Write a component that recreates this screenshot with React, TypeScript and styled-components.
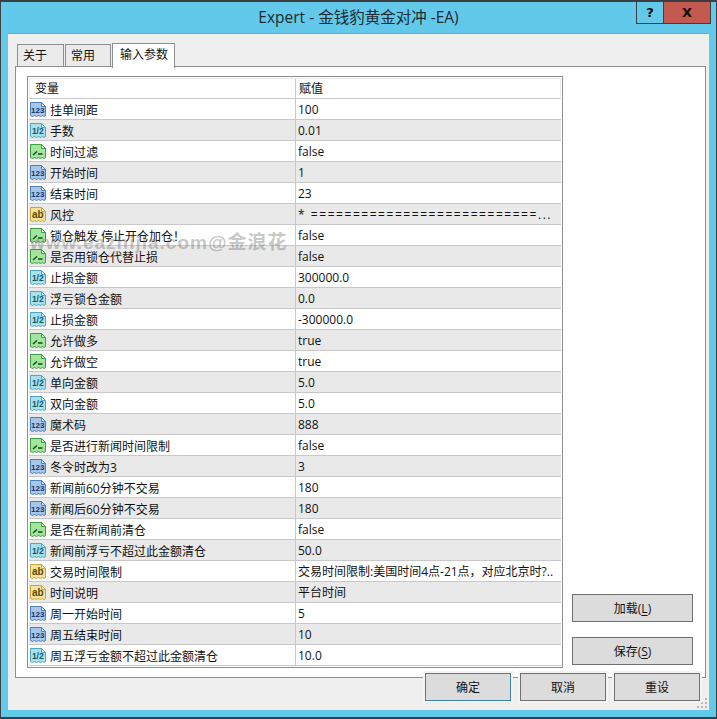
import React from 'react';
import styled, { createGlobalStyle } from 'styled-components';

const FONT = `"Open Sans", "Noto Sans CJK SC", "Noto Sans", sans-serif`;

const GlobalStyle = createGlobalStyle`
  html, body {
    margin: 0;
    padding: 0;
    background: #fff;
  }
  * {
    box-sizing: border-box;
  }
`;

const Window = styled.div`
  position: relative;
  width: 717px;
  height: 719px;
  display: flex;
  flex-direction: column;
  padding: 0 7px 7px;
  background: #62c9ea;
  border: 1px solid #3b3f42;
  border-top-width: 2px;
  border-bottom-width: 2px;
  font-family: ${FONT};
  font-size: 12px;
  color: #111;
`;

const TitleBar = styled.div`
  height: 31px;
  flex: none;
  display: grid;
  grid-template-columns: 1fr auto 1fr;
`;

const Title = styled.div`
  grid-column: 2;
  font-size: 15.5px;
  line-height: 30px;
  color: #1b2a30;
  white-space: nowrap;
`;

const Caption = styled.div`
  grid-column: 3;
  justify-self: end;
  display: flex;
  height: 21px;
  margin-right: -2px;
`;

const CaptionButton = styled.div<{ $width: number; $close?: boolean }>`
  width: ${(p) => p.$width}px;
  height: 22px;
  display: flex;
  align-items: center;
  justify-content: center;
  background: ${(p) => (p.$close ? '#c4594f' : 'transparent')};
  border: 1px solid #3b3f42;
  border-top: none;
  border-left-width: ${(p) => (p.$close ? 0 : 1)}px;
  font-family: "DejaVu Sans", sans-serif;
  font-size: 13px;
  font-weight: 700;
  color: #0a0a0a;
`;

const Client = styled.div`
  position: relative;
  flex: 1;
  display: flex;
  flex-direction: column;
  padding: 8px 3px 0 7px;
  background: #efefef;
  border-top: 1px solid #8d9ba5;
`;

const Tabs = styled.div`
  display: flex;
  align-items: flex-end;
  height: 25px;
  padding-left: 2px;
  margin-bottom: -1px;
`;

const Tab = styled.div<{ $width: number; $active?: boolean }>`
  position: relative;
  z-index: ${(p) => (p.$active ? 2 : 0)};
  width: ${(p) => p.$width}px;
  height: ${(p) => (p.$active ? 25 : 23)}px;
  margin-right: ${(p) => (p.$active ? 0 : 1)}px;
  margin-bottom: ${(p) => (p.$active ? -1 : 0)}px;
  padding-left: ${(p) => (p.$active ? 7 : 5)}px;
  line-height: ${(p) => (p.$active ? 22 : 21)}px;
  background: ${(p) => (p.$active ? '#fff' : '#ebebeb')};
  border: 1px solid #8e8e95;
  border-bottom: ${(p) => (p.$active ? 'none' : '1px solid #8e8e95')};
  white-space: nowrap;
`;

const Panel = styled.div`
  position: relative;
  z-index: 1;
  height: 612px;
  flex: none;
  display: flex;
  padding: 9px 0 9px 11px;
  background: #fff;
  border: 1px solid #8e8e95;
`;

const Grid = styled.div`
  width: 536px;
  height: 592px;
  flex: none;
  padding: 1px;
  border: 1px solid #8e8e95;
  background: #fff;
`;

const HeaderRow = styled.div`
  display: grid;
  grid-template-columns: 265px 1fr;
  height: 21px;
  line-height: 20px;
  border: 1px solid #ececec;
  border-bottom-color: #c8c8c8;
`;

const HeaderCell = styled.div`
  padding-left: 5px;
  & + & {
    padding-left: 3px;
    border-left: 1px solid #c8c8c8;
  }
`;

const Row = styled.div<{ $shade: boolean }>`
  display: grid;
  grid-template-columns: 266px 1fr;
  height: 21px;
  background: ${(p) => (p.$shade ? '#e9e9e9' : '#fff')};
  border-bottom: 1px solid #c8c8c8;
`;

const NameCell = styled.div`
  display: flex;
  align-items: center;
  gap: 3px;
  padding-left: 1px;
  white-space: nowrap;
`;

const NameText = styled.span`
  padding-top: 1px;
`;

const ValueCell = styled.div<{ $spread?: boolean }>`
  padding-left: 2px;
  line-height: 21px;
  letter-spacing: ${(p) => (p.$spread ? '1.55px' : 'normal')};
  border-left: 1px solid #c8c8c8;
  white-space: nowrap;
  overflow: hidden;
`;

const Side = styled.div`
  width: 121px;
  margin-left: 9px;
  padding-bottom: 3px;
  display: flex;
  flex-direction: column;
  justify-content: flex-end;
  gap: 15px;
`;

const Button = styled.div<{ $focus?: boolean }>`
  height: 28px;
  display: flex;
  align-items: center;
  justify-content: center;
  background: #dcdcdc;
  border: 1px solid ${(p) => (p.$focus ? '#3c7fb1' : '#707070')};
  white-space: nowrap;
  u {
    text-underline-offset: 2px;
  }
`;

const Footer = styled.div`
  position: relative;
  z-index: 3;
  display: flex;
  justify-content: flex-end;
  gap: 8px;
  margin-top: -5px;
  padding-right: 6px;
`;

const FooterButton = styled(Button)`
  width: 86px;
  box-shadow: 0 0 0 2px #f4f4f4;
  &:first-child {
    margin-right: 1px;
  }
`;

const Grip = styled.svg`
  position: absolute;
  right: 1px;
  bottom: 1px;
`;

const Watermark = styled.div`
  position: absolute;
  z-index: 5;
  left: 29px;
  top: 228px;
  font-family: "Liberation Sans", "Noto Sans CJK SC", sans-serif;
  font-size: 19px;
  font-weight: 700;
  line-height: 26px;
  letter-spacing: 1px;
  color: rgba(120, 120, 120, 0.42);
  white-space: nowrap;
  pointer-events: none;
`;

type Kind = 'int' | 'dbl' | 'bool' | 'str';

const ICONS: Record<Kind, { fill: string; light: string; line: string; ink: string; label?: string; size?: number }> = {
  int: { fill: '#a7c6ec', light: '#d6e5f7', line: '#4c7fbd', ink: '#12336b', label: '123', size: 8 },
  dbl: { fill: '#a6e1ec', light: '#d8f3f7', line: '#4ea8c2', ink: '#14566b', label: '1/2', size: 8.5 },
  bool: { fill: '#a3e59e', light: '#d9f6d5', line: '#3d9f3d', ink: '#0c4f10' },
  str: { fill: '#f6e39b', light: '#fdf4cf', line: '#c6a53e', ink: '#5f4708', label: 'ab', size: 10 },
};

function ParamIcon({ kind }: { kind: Kind }) {
  const icon = ICONS[kind];
  return (
    <svg width="17" height="17" viewBox="0 0 17 17" style={{ flex: 'none' }}>
      <path
        d="M0.5 1.5H11.5L15.5 5.5V14.5L14 15.5L12.5 14.5L10.5 15.5L8.5 14.5L6.5 15.5L4.5 14.5L2.5 15.5L0.5 14.5Z"
        fill={icon.fill}
        stroke={icon.line}
      />
      <path d="M11.5 1.5V5.5H15.5Z" fill={icon.light} stroke={icon.line} />
      {icon.label ? (
        <text
          x="7.8"
          y="11.8"
          textAnchor="middle"
          fontFamily='"Liberation Sans", sans-serif'
          fontWeight="700"
          fontSize={icon.size}
          fill={icon.ink}
        >
          {icon.label}
        </text>
      ) : (
        <path d="M3 12L7 8.5M8 11H12.5" fill="none" stroke={icon.ink} strokeWidth="1.4" />
      )}
    </svg>
  );
}

const PARAMS: [Kind, string, string][] = [
  ['int', '挂单间距', '100'],
  ['dbl', '手数', '0.01'],
  ['bool', '时间过滤', 'false'],
  ['int', '开始时间', '1'],
  ['int', '结束时间', '23'],
  ['str', '风控', '* ===========================...'],
  ['bool', '锁仓触发 停止开仓加仓！', 'false'],
  ['bool', '是否用锁仓代替止损', 'false'],
  ['dbl', '止损金额', '300000.0'],
  ['dbl', '浮亏锁仓金额', '0.0'],
  ['dbl', '止损金额', '-300000.0'],
  ['bool', '允许做多', 'true'],
  ['bool', '允许做空', 'true'],
  ['dbl', '单向金额', '5.0'],
  ['dbl', '双向金额', '5.0'],
  ['int', '魔术码', '888'],
  ['bool', '是否进行新闻时间限制', 'false'],
  ['int', '冬令时改为3', '3'],
  ['int', '新闻前60分钟不交易', '180'],
  ['int', '新闻后60分钟不交易', '180'],
  ['bool', '是否在新闻前清仓', 'false'],
  ['dbl', '新闻前浮亏不超过此金额清仓', '50.0'],
  ['str', '交易时间限制', '交易时间限制:美国时间4点-21点，对应北京时?..'],
  ['str', '时间说明', '平台时间'],
  ['int', '周一开始时间', '5'],
  ['int', '周五结束时间', '10'],
  ['dbl', '周五浮亏金额不超过此金额清仓', '10.0'],
];

export default function App() {
  return (
    <Window>
      <GlobalStyle />
      <TitleBar>
        <Title>Expert - 金钱豹黄金对冲 -EA)</Title>
        <Caption>
          <CaptionButton $width={28}>?</CaptionButton>
          <CaptionButton $width={47} $close>X</CaptionButton>
        </Caption>
      </TitleBar>
      <Client>
        <Tabs>
          <Tab $width={47}>关于</Tab>
          <Tab $width={46}>常用</Tab>
          <Tab $width={63} $active>输入参数</Tab>
        </Tabs>
        <Panel>
          <Grid>
            <HeaderRow>
              <HeaderCell>变量</HeaderCell>
              <HeaderCell>赋值</HeaderCell>
            </HeaderRow>
            {PARAMS.map(([kind, name, value], i) => (
              <Row key={i} $shade={i % 2 === 1}>
                <NameCell>
                  <ParamIcon kind={kind} />
                  <NameText>{name}</NameText>
                </NameCell>
                <ValueCell $spread={value.startsWith('*')}>{value}</ValueCell>
              </Row>
            ))}
          </Grid>
          <Side>
            <Button>加载(<u>L</u>)</Button>
            <Button>保存(<u>S</u>)</Button>
          </Side>
        </Panel>
        <Footer>
          <FooterButton $focus>确定</FooterButton>
          <FooterButton>取消</FooterButton>
          <FooterButton>重设</FooterButton>
        </Footer>
        <Grip width="11" height="11" viewBox="0 0 11 11" fill="#b4b4b4">
          <rect x="8" y="0" width="2" height="2" />
          <rect x="4" y="4" width="2" height="2" />
          <rect x="8" y="4" width="2" height="2" />
          <rect x="0" y="8" width="2" height="2" />
          <rect x="4" y="8" width="2" height="2" />
          <rect x="8" y="8" width="2" height="2" />
        </Grip>
      </Client>
      <Watermark>www.eazhijia.com@金浪花</Watermark>
    </Window>
  );
}
